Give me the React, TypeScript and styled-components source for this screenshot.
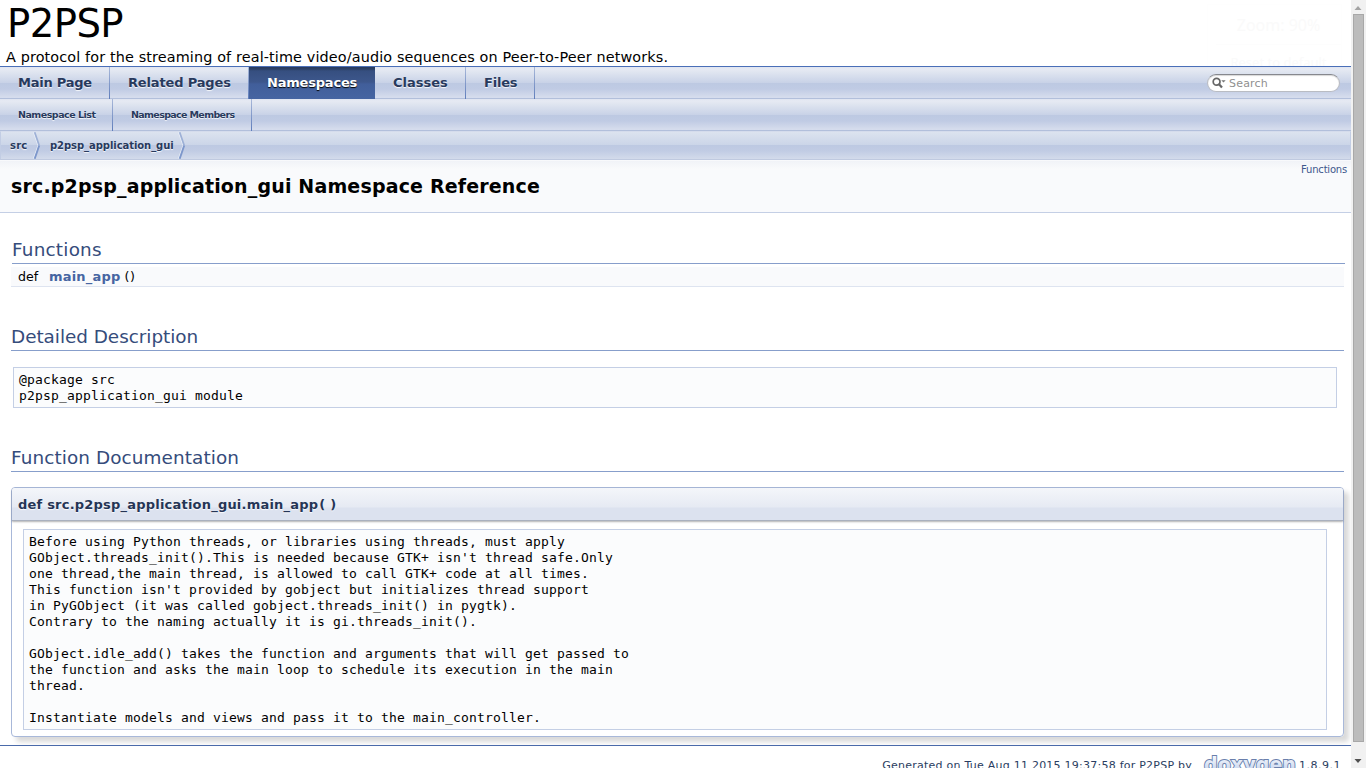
import React from 'react';
import styled, { createGlobalStyle, css } from 'styled-components';

const sans = '"DejaVu Sans", sans-serif';
const mono = '"DejaVu Sans Mono", monospace';

const GlobalStyle = createGlobalStyle`
  html, body { margin: 0; height: 768px; overflow: hidden; background: #fff; }
  body { font-family: ${sans}; font-size: 13px; color: #000; }
  * { box-sizing: border-box; }
`;

const Window = styled.div`
  display: grid;
  grid-template-columns: 1351px 15px;
  width: 1366px;
  height: 768px;
  overflow: hidden;
`;

const Page = styled.main`
  height: 768px;
  overflow: hidden;
  position: relative;
`;

const Text = styled.span<{ $ls?: number }>`
  letter-spacing: ${(p) => p.$ls ?? 0}px;
  white-space: pre;
`;

const TitleArea = styled.header`
  height: 67px;
  border-bottom: 1px solid #4a6fb8;
  position: relative;
`;
const ProjectName = styled.div`
  font-size: 38.6px;
  line-height: 45px;
  height: 47px;
  padding: 1px 0 0 7px;
`;
const ProjectBrief = styled.div`
  font-size: 14.4px;
  line-height: 20px;
  padding-left: 6px;
`;
const ZoomBubble = styled.div`
  position: absolute;
  right: 9px;
  top: 4px;
  width: 135px;
  height: 62px;
  overflow: hidden;
  text-align: center;
  color: #fafafa;
  font-family: "Noto Sans", sans-serif;
  border: 1px solid #fefefe;
  border-bottom: 0;
`;
const ZoomLabel = styled.div`
  font-size: 16px;
  line-height: 40px;
  height: 40px;
  margin-left: 8px;
  border-bottom: 1px solid #fdfdfd;
`;
const ZoomReset = styled.div`
  font-size: 13px;
  line-height: 34px;
  padding-left: 8px;
`;

const barGradient = css`
  background: linear-gradient(
    to bottom,
    #dfe4f0 0px, #e6eaf3 2px, #e2e7f1 4px, #c8d2e7 15.9px,
    #bdc9e2 16px, #c0cbe4 22px, #d4dbec 29.5px, #d6ddee 30.9px, #b2bfdb 31px, #b2bfdb 32px
  );
`;
const TabBar = styled.nav`
  display: flex;
  height: 32px;
  ${barGradient}
`;
const Tab = styled.a<{ $w: number; $active?: boolean; $small?: boolean }>`
  width: ${(p) => p.$w}px;
  height: 32px;
  padding-left: 18px;
  font-weight: bold;
  font-size: ${(p) => (p.$small ? 9.5 : 13)}px;
  line-height: 32px;
  color: #283a5d;
  text-shadow: 0 1px 1px rgba(255, 255, 255, 0.9);
  background: linear-gradient(to bottom, #a8b8d9, #5f7dbb) right / 1px 100% no-repeat;
  ${(p) =>
    p.$active &&
    css`
      color: #fff;
      text-shadow: 0 1px 1px #000;
      background: linear-gradient(to bottom, #283a5d 0, #2c4066 2px, #364f80 4px, #3d578c 15px, #415e9a 17px, #4665a2 32px);
    `}
`;
const SearchBox = styled.div`
  margin: 7px 11px 0 auto;
  width: 133px;
  height: 18px;
  border-radius: 9px;
  display: flex;
  align-items: center;
  padding-left: 4px;
  background: #fff;
  border: 1px solid #b9bcc3;
  border-top: 1.5px solid #86888e;
  box-shadow: inset 0 1px 1px #d8d8d8;
  color: #909090;
  font-size: 11px;
`;
const SearchIcon = styled.svg`
  width: 14px;
  height: 12px;
  margin-right: 3px;
`;

const NavPath = styled.nav`
  height: 29px;
  display: flex;
  border: 1px solid #c2cde4;
  border-top-color: #d5dcec;
  border-bottom-color: #c0cae0;
  background: linear-gradient(to bottom, #dce3ef 0, #cbd5e8 13px, #bdc9e2 13.1px, #c1cce4 19px, #d3dbeb 27px);
  font-size: 10px;
  font-weight: bold;
  line-height: 27px;
  color: #283a5d;
  text-shadow: 0 1px 1px rgba(255, 255, 255, 0.9);
`;
const Crumb = styled.a<{ $w: number }>`
  width: ${(p) => p.$w}px;
  padding-left: 9px;
  display: flex;
  justify-content: space-between;
`;
const Chevron = styled.svg`
  width: 8px;
  height: 27px;
`;

const Heading = styled.div`
  height: 53px;
  display: flex;
  justify-content: space-between;
  background: linear-gradient(to bottom, #fff 0, #f1f3f8 1px, #f9fafc 9px, #f9fafc 100%);
  border-bottom: 1px solid #c4cfe5;
`;
const HeadTitle = styled.h1`
  margin: 0;
  padding: 11px 0 0 11px;
  font-size: 19px;
  line-height: 31px;
`;
const Summary = styled.a`
  padding: 3px 4px 0 0;
  font-size: 10px;
  line-height: 14px;
  color: #3d578c;
`;

const Contents = styled.div`
  padding: 0 7px 0 11px;
`;
const GroupHeader = styled.h2<{ $top: number; $inset?: boolean }>`
  margin: ${(p) => p.$top}px 0 0 ${(p) => (p.$inset ? 1 : 0)}px;
  ${(p) => p.$inset && 'margin-right: -1px;'}
  height: 29px;
  font-size: 18.4px;
  font-weight: normal;
  line-height: 30px;
  color: #354c7b;
  border-bottom: 1px solid #879ecb;
`;
const Member = styled.div`
  display: flex;
  margin-top: 3px;
  height: 20px;
  padding-left: 7px;
  font-size: 12.6px;
  line-height: 19px;
  background: #f9fafc;
  border-bottom: 1px solid #dee4f0;
`;
const MemberType = styled.div`
  width: 31px;
`;
const MemberLink = styled.a`
  font-size: 13px;
  font-weight: bold;
  color: #4665a2;
  margin-right: 4px;
`;

const Fragment = styled.pre<{ $margin: string }>`
  margin: ${(p) => p.$margin};
  padding: 4px 5px 3px;
  border: 1px solid #c4cfe5;
  background: #fbfcfd;
  font-family: ${mono};
  font-size: 13px;
  letter-spacing: 0.174px;
  line-height: 16px;
`;

const MemItem = styled.section`
  margin-top: 15px;
  height: 250px;
  border: 1px solid #a8b8d9;
  border-radius: 4px;
  box-shadow: 5px 5px 5px rgba(0, 0, 0, 0.15);
`;
const MemProto = styled.div`
  height: 33px;
  padding-left: 6px;
  font-size: 13px;
  font-weight: bold;
  line-height: 34px;
  color: #253555;
  text-shadow: 0 1px 1px rgba(255, 255, 255, 0.9);
  border-radius: 3px 3px 0 0;
  border-bottom: 1px solid #a9b0be;
  background: linear-gradient(to bottom, #f4f6fa 0, #e6eaf3 19px, #dce2ef 20px, #dce2ef 100%);
  box-shadow: 0 1px 2px rgba(0, 0, 0, 0.3);
`;
const Parens = styled(Text)`
  margin-left: 1px;
`;

const Footer = styled.footer`
  margin-top: 8px;
  border-top: 1px solid #4a6aaa;
  padding-right: 10px;
  height: 30px;
  display: flex;
  justify-content: flex-end;
  color: #2a3d61;
  font-size: 11px;
  line-height: 40px;
`;
const Logo = styled.svg`
  width: 96px;
  height: 30px;
  margin: 4px 1px 0 10px;
`;

const Scroll = styled.aside`
  background: #f1f1f1;
  display: flex;
  flex-direction: column;
  align-items: center;
`;
const Arrow = styled.svg<{ $down?: boolean }>`
  width: 15px;
  height: 14px;
  ${(p) => p.$down && 'margin-top: auto;'}
`;
const Thumb = styled.div`
  width: 11px;
  margin-left: -1px;
  height: 728px;
  background: #bcbcbc;
  border: 1px solid #a8a8a8;
`;

const doc = `Before using Python threads, or libraries using threads, must apply
GObject.threads_init().This is needed because GTK+ isn't thread safe.Only
one thread,the main thread, is allowed to call GTK+ code at all times.
This function isn't provided by gobject but initializes thread support
in PyGObject (it was called gobject.threads_init() in pygtk).
Contrary to the naming actually it is gi.threads_init().

GObject.idle_add() takes the function and arguments that will get passed to
the function and asks the main loop to schedule its execution in the main
thread.

Instantiate models and views and pass it to the main_controller.`;

function PathChevron() {
  return (
    <Chevron viewBox="0 0 8 27">
      <path d="M0.5 0.5 L5 13.5 L0.5 26.5" fill="none" stroke="#e9eef7" strokeWidth="1" />
      <path d="M1.7 0.3 L6.2 13.5" fill="none" stroke="#9db0d6" strokeWidth="1.7" />
      <path d="M6.2 13.5 L1.7 26.7" fill="none" stroke="#7d97cb" strokeWidth="1.9" />
    </Chevron>
  );
}

export default function App() {
  return (
    <>
      <GlobalStyle />
      <Window>
        <Page>
          <TitleArea>
            <ProjectName><Text $ls={-0.55}>P2PSP</Text></ProjectName>
            <ProjectBrief>
              <Text $ls={0.126}>A protocol for the streaming of real-time video/audio sequences on Peer-to-Peer networks.</Text>
            </ProjectBrief>
            <ZoomBubble>
              <ZoomLabel>Zoom: 90%</ZoomLabel>
              <ZoomReset>Reset to default</ZoomReset>
            </ZoomBubble>
          </TitleArea>
          <TabBar>
            <Tab $w={110}><Text $ls={-0.24}>Main Page</Text></Tab>
            <Tab $w={139}><Text $ls={-0.15}>Related Pages</Text></Tab>
            <Tab $w={126} $active><Text $ls={-0.2}>Namespaces</Text></Tab>
            <Tab $w={91}><Text>Classes</Text></Tab>
            <Tab $w={69}><Text $ls={-0.2}>Files</Text></Tab>
            <SearchBox>
              <SearchIcon viewBox="0 0 14 12">
                <circle cx="4.6" cy="4.8" r="3.4" fill="none" stroke="#666" strokeWidth="1.7" />
                <path d="M7 7.3 L10 10.6" stroke="#666" strokeWidth="2.2" />
                <path d="M9.3 3.2 h4.4 l-2.2 2.4z" fill="#777" />
              </SearchIcon>
              <Text $ls={0.2}>Search</Text>
            </SearchBox>
          </TabBar>
          <TabBar>
            <Tab $w={113} $small><Text $ls={-0.5}>Namespace List</Text></Tab>
            <Tab $w={139} $small><Text $ls={-0.64}>Namespace Members</Text></Tab>
          </TabBar>
          <NavPath>
            <Crumb $w={40}><Text $ls={0.2}>src</Text><PathChevron /></Crumb>
            <Crumb $w={145}><Text $ls={-0.06}>p2psp_application_gui</Text><PathChevron /></Crumb>
          </NavPath>
          <Heading>
            <HeadTitle><Text $ls={0.165}>src.p2psp_application_gui Namespace Reference</Text></HeadTitle>
            <Summary><Text $ls={-0.2}>Functions</Text></Summary>
          </Heading>
          <Contents>
            <GroupHeader $top={22} $inset><Text $ls={0.22}>Functions</Text></GroupHeader>
            <Member>
              <MemberType><Text>def</Text></MemberType>
              <MemberLink><Text $ls={0.2}>main_app</Text></MemberLink>
              <Text $ls={0.6}>()</Text>
            </Member>
            <GroupHeader $top={35}><Text $ls={-0.03}>Detailed Description</Text></GroupHeader>
            <Fragment $margin="16px 7px 0 2px">{'@package src\np2psp_application_gui module'}</Fragment>
            <GroupHeader $top={35}><Text $ls={0.1}>Function Documentation</Text></GroupHeader>
            <MemItem>
              <MemProto><Text $ls={0.21}>def src.p2psp_application_gui.main_app</Text><Parens $ls={0.2}>( )</Parens></MemProto>
              <Fragment $margin="8px 16px 0 11px">{doc}</Fragment>
            </MemItem>
          </Contents>
          <Footer>
            <Text $ls={0.24}>Generated on Tue Aug 11 2015 19:37:58 for P2PSP by</Text>
            <Logo viewBox="0 0 96 30">
              <defs>
                <linearGradient id="logoFill" x1="0" y1="0" x2="0" y2="1">
                  <stop offset="0" stopColor="#ffffff" />
                  <stop offset="1" stopColor="#b4c6e8" />
                </linearGradient>
              </defs>
              <text x="2" y="22" fontFamily="DejaVu Sans" fontWeight="bold" fontSize="21" textLength="92" lengthAdjust="spacingAndGlyphs" fill="url(#logoFill)" stroke="#6a7fac" strokeWidth="2" paintOrder="stroke">doxygen</text>
            </Logo>
            <Text $ls={0.5}>1.8.9.1</Text>
          </Footer>
        </Page>
        <Scroll>
          <Arrow viewBox="0 0 15 14"><path d="M3.5 10 L7 6 L10.5 10z" fill="#a3a3a3" /></Arrow>
          <Thumb />
          <Arrow $down viewBox="0 0 15 14"><path d="M3.5 5 h7 l-3.5 4z" fill="#505050" /></Arrow>
        </Scroll>
      </Window>
    </>
  );
}
